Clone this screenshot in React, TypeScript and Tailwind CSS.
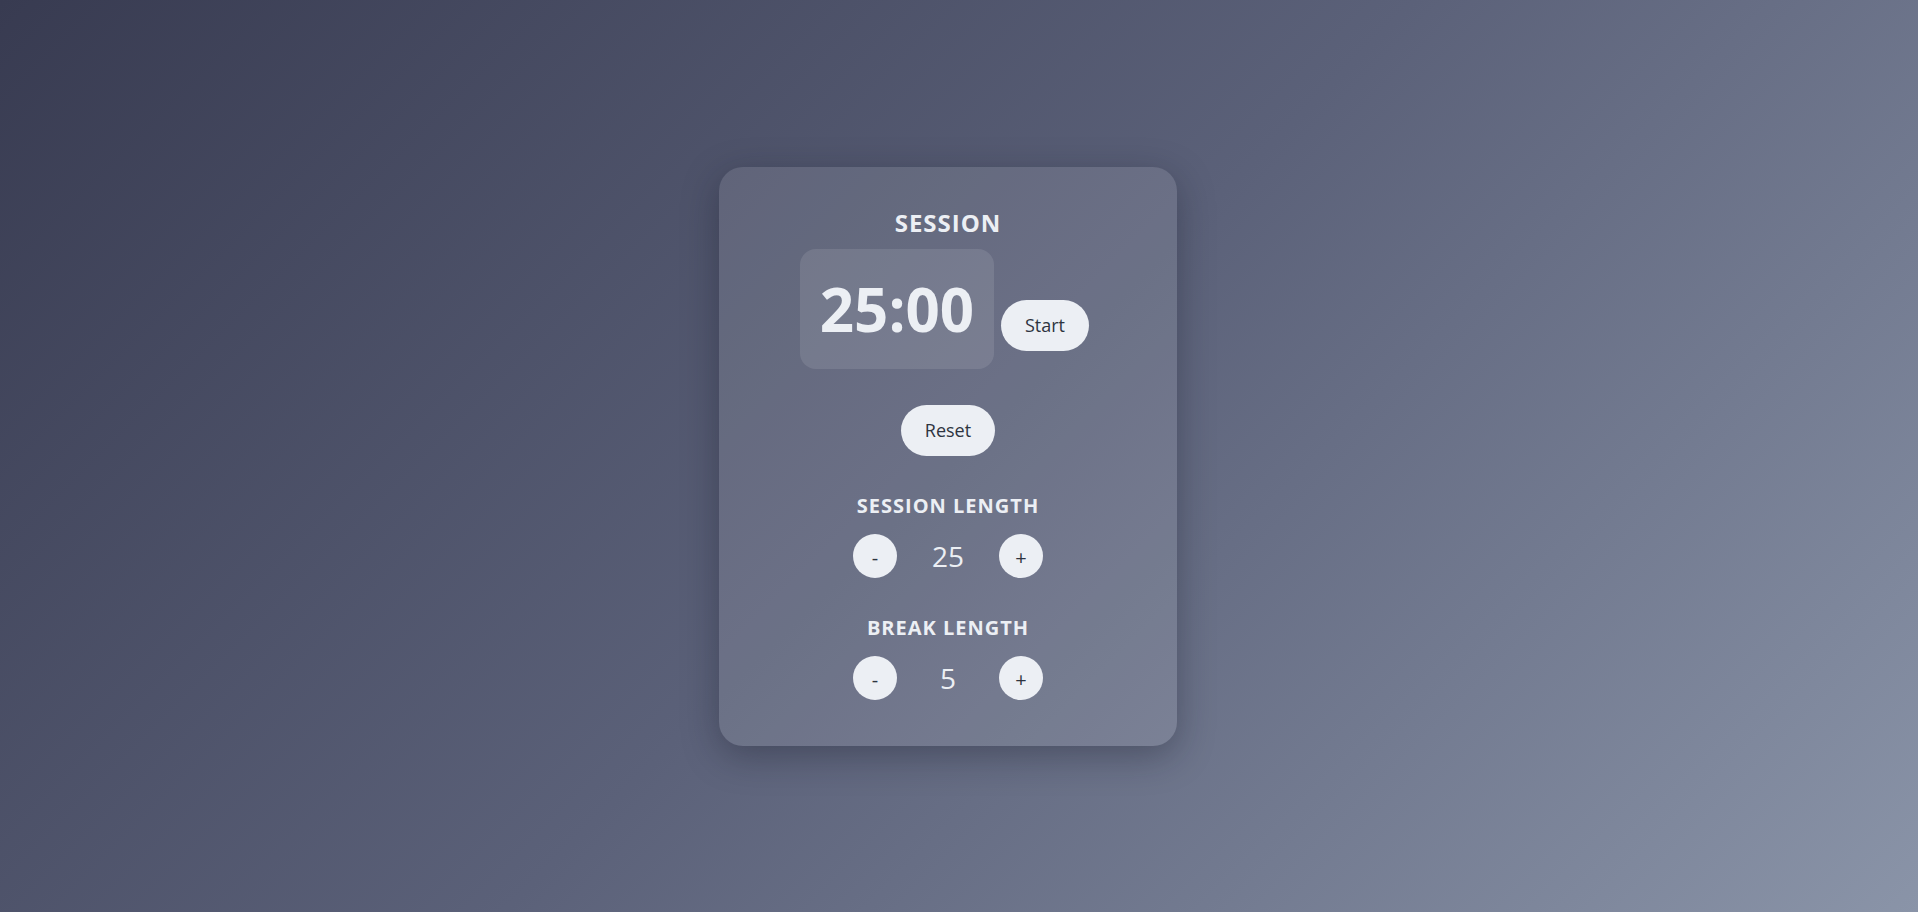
import { useState } from "react";

const font = { fontFamily: '"Open Sans", "Noto Sans", sans-serif' };

function Stepper({
  label,
  value,
  onDec,
  onInc,
}: {
  label: string;
  value: number;
  onDec: () => void;
  onInc: () => void;
}) {
  return (
    <div className="flex flex-col items-center mt-9">
      <h3 className="text-[20px] leading-[28px] font-bold tracking-[1px] text-[#eceff4] uppercase">
        {label}
      </h3>
      <div className="flex items-center mt-3.5">
        <button
          onClick={onDec}
          className="w-11 h-11 rounded-full bg-[#eceff4] text-[#2e3440] text-[20px] leading-none flex items-center justify-center pt-1"
        >
          -
        </button>
        <span className="w-[102px] text-center text-[28px] leading-none text-[#eceff4]">
          {value}
        </span>
        <button
          onClick={onInc}
          className="w-11 h-11 rounded-full bg-[#eceff4] text-[#2e3440] text-[20px] leading-none flex items-center justify-center pt-1"
        >
          +
        </button>
      </div>
    </div>
  );
}

export default function App() {
  const [session, setSession] = useState(25);
  const [brk, setBrk] = useState(5);
  const [running, setRunning] = useState(false);

  const clamp = (n: number) => Math.max(1, Math.min(60, n));

  return (
    <main
      style={font}
      className="min-h-screen flex items-center justify-center bg-[linear-gradient(135deg,#383b51_0%,#5b6179_50%,#8a94a8_100%)]"
    >
      <div className="w-[458px] mr-[22px] rounded-3xl bg-white/10 shadow-[0_10px_36px_rgba(20,22,36,0.35)] pt-10 pb-[46px] flex flex-col items-center">
        <h2 className="text-[24px] leading-[32px] font-bold tracking-[1px] text-[#eceff4]">
          SESSION
        </h2>
        <div className="flex items-baseline gap-[7px] mt-2.5">
          <div className="w-[194px] h-[120px] rounded-2xl bg-white/10 flex items-center justify-center">
            <span className="text-[60px] leading-none font-bold text-[#eceff4]">
              {String(session).padStart(2, "0")}:00
            </span>
          </div>
          <button
            onClick={() => setRunning(!running)}
            className="mr-[7px] px-6 py-3 rounded-full bg-[#eceff4] text-[#2e3440] text-[18px] leading-[27px]"
          >
            {running ? "Pause" : "Start"}
          </button>
        </div>
        <button
          onClick={() => {
            setRunning(false);
            setSession(25);
            setBrk(5);
          }}
          className="mt-9 px-6 py-3 rounded-full bg-[#eceff4] text-[#2e3440] text-[18px] leading-[27px]"
        >
          Reset
        </button>
        <Stepper
          label="Session Length"
          value={session}
          onDec={() => setSession(clamp(session - 1))}
          onInc={() => setSession(clamp(session + 1))}
        />
        <Stepper
          label="Break Length"
          value={brk}
          onDec={() => setBrk(clamp(brk - 1))}
          onInc={() => setBrk(clamp(brk + 1))}
        />
      </div>
    </main>
  );
}
